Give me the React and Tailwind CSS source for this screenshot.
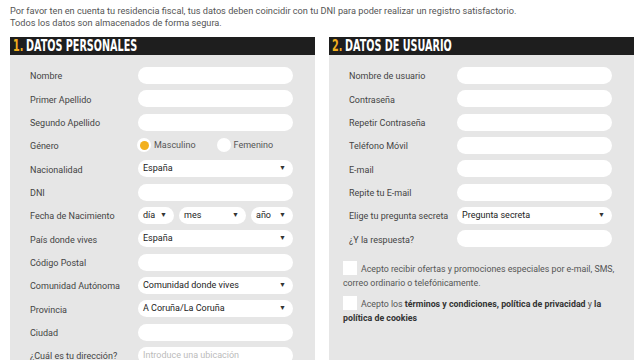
const personal = [
  { label: 'Nombre', type: 'input' },
  { label: 'Primer Apellido', type: 'input' },
  { label: 'Segundo Apellido', type: 'input' },
  { label: 'Género', type: 'radio' },
  { label: 'Nacionalidad', type: 'select', value: 'España' },
  { label: 'DNI', type: 'input' },
  { label: 'Fecha de Nacimiento', type: 'date' },
  { label: 'País donde vives', type: 'select', value: 'España' },
  { label: 'Código Postal', type: 'input' },
  { label: 'Comunidad Autónoma', type: 'select', value: 'Comunidad donde vives' },
  { label: 'Provincia', type: 'select', value: 'A Coruña/La Coruña' },
  { label: 'Ciudad', type: 'input' },
  { label: '¿Cuál es tu dirección?', type: 'input', placeholder: 'Introduce una ubicación' },
];

const usuario = [
  { label: 'Nombre de usuario', type: 'input' },
  { label: 'Contraseña', type: 'input' },
  { label: 'Repetir Contraseña', type: 'input' },
  { label: 'Teléfono Móvil', type: 'input' },
  { label: 'E-mail', type: 'input' },
  { label: 'Repite tu E-mail', type: 'input' },
  { label: 'Elige tu pregunta secreta', type: 'select', value: 'Pregunta secreta' },
  { label: '¿Y la respuesta?', type: 'input' },
];

const Arrow = () => <span className="text-[7px] leading-none text-[#333]">▼</span>;

const Select = ({ value, className = '' }) => (
  <div className={`h-[17px] bg-white rounded-full flex items-center justify-between pl-[5px] pr-[7px] text-[9px] text-[#222] ${className}`}>
    <span className="leading-none">{value}</span>
    <Arrow />
  </div>
);

const Field = ({ row }) => {
  if (row.type === 'radio') {
    return (
      <div className="flex items-center h-[17px] text-[9px] text-[#555]">
        <span className="w-[14px] h-[14px] rounded-full bg-white flex items-center justify-center ml-[-1px]">
          <span className="w-[9px] h-[9px] rounded-full bg-[#f2b01e]" />
        </span>
        <span className="ml-[3px]">Masculino</span>
        <span className="w-[14px] h-[14px] rounded-full bg-white ml-[21px]" />
        <span className="ml-[3px]">Femenino</span>
      </div>
    );
  }
  if (row.type === 'select') return <Select value={row.value} />;
  if (row.type === 'date') {
    return (
      <div className="flex gap-[5px]">
        <Select value="día" className="w-[36px]" />
        <Select value="mes" className="w-[67px]" />
        <Select value="año" className="w-[42px]" />
      </div>
    );
  }
  return (
    <div className="h-[17px] bg-white rounded-full flex items-center pl-[5px] text-[9px] text-[#bbb]">
      {row.placeholder}
    </div>
  );
};

const Panel = ({ num, title, rows, children }) => (
  <div className="w-[305px] flex flex-col">
    <div className="h-[18px] bg-[#1e1e1e] flex items-center pl-[3px] overflow-hidden">
      <span
        className="inline-block whitespace-nowrap origin-left scale-x-[0.67] text-[16px] leading-none font-bold"
        style={{ fontFamily: '"Liberation Sans Narrow", "DejaVu Sans Condensed", "Roboto", sans-serif', fontStretch: 'condensed' }}
      >
        <span className="text-[#f2b01e]">{num}.</span>
        <span className="text-white ml-[4px]">{title}</span>
      </span>
    </div>
    <div className="bg-[#e6e6e6] flex-1 pt-[12px] pl-[20px] pr-[22px] pb-[20px]">
      <div className="flex flex-col gap-[6.33px]">
        {rows.map((row) => (
          <div key={row.label} className="flex items-center h-[17px]">
            <div className="w-[108px] text-[9px] text-[#444] pt-[3px] shrink-0 whitespace-nowrap">{row.label}</div>
            <div className="flex-1">
              <Field row={row} />
            </div>
          </div>
        ))}
      </div>
      {children}
    </div>
  </div>
);

export default function App() {
  return (
    <div className="w-[640px] h-[360px] overflow-hidden bg-white" style={{ fontFamily: 'Roboto, "Liberation Sans", sans-serif' }}>
      <div className="pl-[10px] pt-[5px] text-[9.2px] leading-[12px] text-[#555]">
        <p>Por favor ten en cuenta tu residencia fiscal, tus datos deben coincidir con tu DNI para poder realizar un registro satisfactorio.</p>
        <p>Todos los datos son almacenados de forma segura.</p>
      </div>
      <div className="flex gap-[14px] pl-[10px] mt-[8px] h-[400px]">
        <Panel num="1" title="DATOS PERSONALES" rows={personal} />
        <Panel num="2" title="DATOS DE USUARIO" rows={usuario}>
          {/* consent checkboxes */}
          <div className="mt-[15px] ml-[-6px] mr-[-4px] text-[8.8px] leading-[14px] text-[#555]">
            <p>
              <span className="float-left w-[14px] h-[14px] bg-white mr-[4px] mt-[-1px]" />
              Acepto recibir ofertas y promociones especiales por e-mail, SMS, correo ordinario o telefónicamente.
            </p>
            <p className="mt-[7px] clear-both">
              <span className="float-left w-[14px] h-[14px] bg-white mr-[4px] mt-[-1px]" />
              Acepto los <b className="text-[#333]">términos y condiciones, política de privacidad</b> y <b className="text-[#333]">la</b>{' '}
              <b className="text-[#333]">política de cookies</b>
            </p>
          </div>
        </Panel>
      </div>
    </div>
  );
}
